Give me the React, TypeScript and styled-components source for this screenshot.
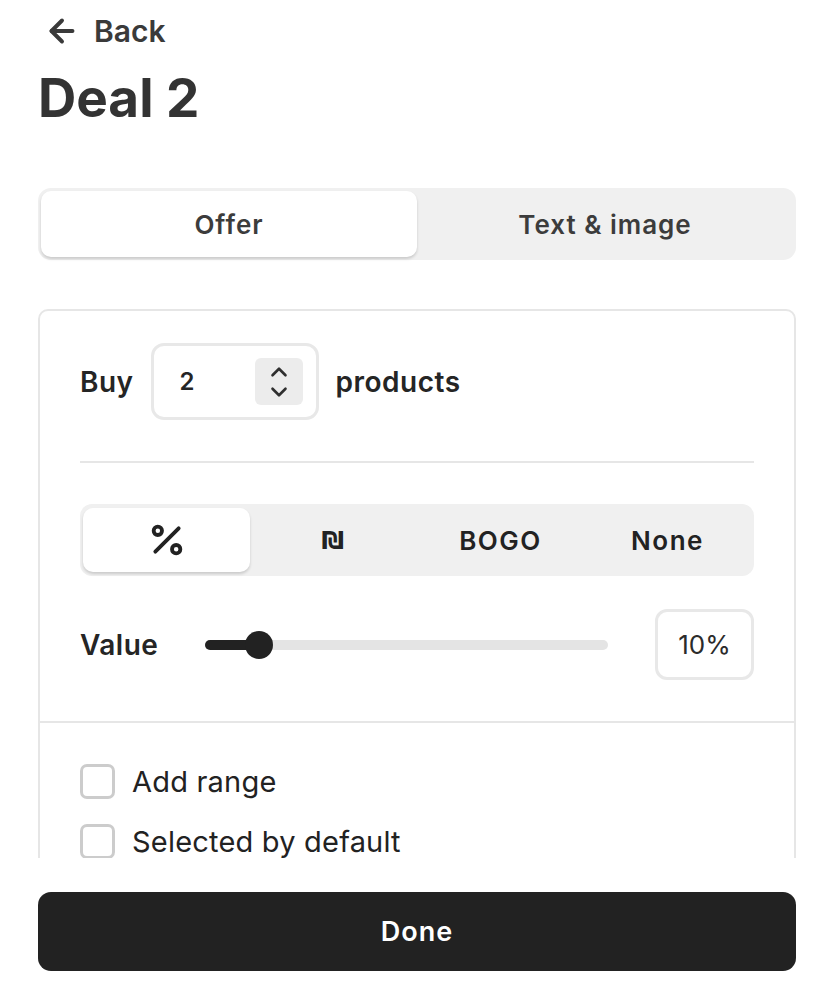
import React, { useState } from 'react';
import styled, { createGlobalStyle } from 'styled-components';
import { ArrowLeft, ChevronUp, ChevronDown, Percent } from 'lucide-react';

const GlobalStyle = createGlobalStyle`
  html, body {
    margin: 0;
    padding: 0;
    background: #ffffff;
    font-family: "Inter", "Lato", sans-serif;
    color: #2b2b2b;
  }
  * { box-sizing: border-box; }
`

const Page = styled.div`
  display: flex;
  flex-direction: column;
  width: 832px;
  height: 1000px;
  padding: 10px 36px 0 38px;
`

const BackLink = styled.button`
  display: flex;
  align-items: center;
  gap: 14px;
  align-self: flex-start;
  background: none;
  border: none;
  padding: 0 0 0 6px;
  height: 42px;
  font-family: inherit;
  font-size: 30px;
  font-weight: 600;
  color: #3a3a3a;
  cursor: pointer;
`

const Title = styled.h1`
  margin: 14px 0 0 0;
  font-size: 53px;
  line-height: 64px;
  font-weight: 700;
  color: #333333;
`

const Tabs = styled.div`
  display: grid;
  grid-template-columns: 1fr 1fr;
  margin-top: 58px;
  height: 72px;
  padding: 3px;
  background: #f0f0f0;
  border-radius: 13px;
`

const Tab = styled.button<{ $active?: boolean }>`
  border: none;
  border-radius: 10px;
  font-family: inherit;
  font-size: 26px;
  font-weight: 600;
  letter-spacing: 1px;
  color: #3c3c3c;
  background: ${p => (p.$active ? '#ffffff' : 'transparent')};
  box-shadow: ${p => (p.$active ? '0 2px 3px rgba(0,0,0,0.16)' : 'none')};
  cursor: pointer;
`

const ScrollArea = styled.div`
  margin-top: 49px;
  height: 549px;
  overflow: hidden;
`

const Card = styled.div`
  border: 2px solid #e6e6e6;
  border-radius: 10px;
`

const Section = styled.div<{ $pad: string }>`
  padding: ${p => p.$pad};
  display: flex;
  flex-direction: column;
`

const BuyRow = styled.div`
  display: flex;
  align-items: center;
  gap: 17px;
`

const Label = styled.span`
  font-size: 28px;
  font-weight: 600;
  letter-spacing: 0.5px;
  color: #252525;
`

const NumberBox = styled.div`
  display: flex;
  align-items: center;
  justify-content: space-between;
  width: 168px;
  height: 77px;
  padding: 0 13px 0 26px;
  border: 3px solid #e8e8e8;
  border-radius: 13px;
  font-size: 24px;
  font-weight: 600;
  color: #252525;
`

const Stepper = styled.div`
  display: flex;
  flex-direction: column;
  align-items: center;
  justify-content: center;
  width: 48px;
  height: 47px;
  border-radius: 6px;
  background: #ececec;
  color: #2f2f2f;
`

const Divider = styled.hr<{ $space: number }>`
  border: none;
  border-top: 2px solid #e6e6e6;
  margin: ${p => p.$space}px 0;
`

const Segmented = styled.div`
  display: grid;
  grid-template-columns: repeat(4, 1fr);
  height: 72px;
  padding: 4px 3px;
  background: #f0f0f0;
  border-radius: 12px;
`

const Segment = styled.button<{ $active?: boolean }>`
  display: flex;
  align-items: center;
  justify-content: center;
  border: none;
  border-radius: 10px;
  font-family: inherit;
  font-size: 26px;
  font-weight: 600;
  letter-spacing: 1.5px;
  color: #222222;
  background: ${p => (p.$active ? '#ffffff' : 'transparent')};
  box-shadow: ${p => (p.$active ? '0 2px 3px rgba(0,0,0,0.16)' : 'none')};
  cursor: pointer;
`

const Shekel = styled.span`
  font-family: "DejaVu Sans", sans-serif;
  font-size: 25px;
  font-weight: 700;
`

const ValueRow = styled.div`
  display: flex;
  align-items: center;
  margin-top: 33px;
`

const ValueLabel = styled(Label)`
  width: 125px;
`

const Track = styled.div`
  position: relative;
  flex: 1;
  height: 10px;
  border-radius: 5px;
  background: #e4e4e4;
  margin-right: 47px;
`

const Fill = styled.div`
  height: 100%;
  border-radius: 5px;
  background: #222222;
`

const Thumb = styled.div`
  position: absolute;
  top: 50%;
  width: 28px;
  height: 28px;
  margin-left: -14px;
  margin-top: -14px;
  border-radius: 50%;
  background: #222222;
`

const ValueBox = styled.div`
  display: flex;
  align-items: center;
  justify-content: center;
  width: 99px;
  height: 71px;
  border: 3px solid #e8e8e8;
  border-radius: 12px;
  font-size: 26px;
  color: #2b2b2b;
`

const CheckRow = styled.label`
  display: flex;
  align-items: center;
  gap: 17px;
  height: 36px;
  font-size: 29px;
  letter-spacing: 0.2px;
  color: #222222;
  & + & {
    margin-top: 24px;
  }
`

const CheckBox = styled.span`
  flex-shrink: 0;
  width: 35px;
  height: 35px;
  border: 3px solid #cccccc;
  border-radius: 7px;
`

const Footer = styled.div`
  padding-top: 34px;
`

const DoneButton = styled.button`
  width: 758px;
  height: 79px;
  border: none;
  border-radius: 13px;
  background: #222222;
  color: #ffffff;
  font-family: inherit;
  font-size: 27px;
  font-weight: 600;
  letter-spacing: 1px;
  cursor: pointer;
`

export default function App() {
  const [tab, setTab] = useState("offer");
  const [kind, setKind] = useState("percent");
  const value = 10;

  return (
    <Page>
      <GlobalStyle />
      <BackLink>
        <ArrowLeft size={36} strokeWidth={2.6} />
        Back
      </BackLink>
      <Title>Deal 2</Title>

      <Tabs>
        <Tab $active={tab === "offer"} onClick={() => setTab("offer")}>Offer</Tab>
        <Tab $active={tab === "text"} onClick={() => setTab("text")}>Text &amp; image</Tab>
      </Tabs>

      <ScrollArea>
        <Card>
          <Section $pad="32px 40px 41px 40px">
            <BuyRow>
              <Label>Buy</Label>
              <NumberBox>
                2
                <Stepper>
                  <ChevronUp size={26} strokeWidth={2.4} style={{ marginBottom: -3 }} />
                  <ChevronDown size={26} strokeWidth={2.4} style={{ marginTop: -3 }} />
                </Stepper>
              </NumberBox>
              <Label>products</Label>
            </BuyRow>

            <Divider $space={41} />

            <Segmented>
              <Segment $active={kind === "percent"} onClick={() => setKind("percent")}>
                <Percent size={40} strokeWidth={2.3} />
              </Segment>
              <Segment $active={kind === "fixed"} onClick={() => setKind("fixed")}>
                <Shekel>₪</Shekel>
              </Segment>
              <Segment $active={kind === "bogo"} onClick={() => setKind("bogo")}>BOGO</Segment>
              <Segment $active={kind === "none"} onClick={() => setKind("none")}>None</Segment>
            </Segmented>

            <ValueRow>
              <ValueLabel>Value</ValueLabel>
              <Track>
                <Fill style={{ width: `${(value / 75) * 100}%` }} />
                <Thumb style={{ left: `${(value / 75) * 100}%` }} />
              </Track>
              <ValueBox>{value}%</ValueBox>
            </ValueRow>
          </Section>

          <Divider $space={0} />

          <Section $pad="40px 40px 40px 40px">
            <CheckRow>
              <CheckBox />
              Add range
            </CheckRow>
            <CheckRow>
              <CheckBox />
              Selected by default
            </CheckRow>
          </Section>
        </Card>
      </ScrollArea>

      <Footer>
        <DoneButton>Done</DoneButton>
      </Footer>
    </Page>
  );
}
